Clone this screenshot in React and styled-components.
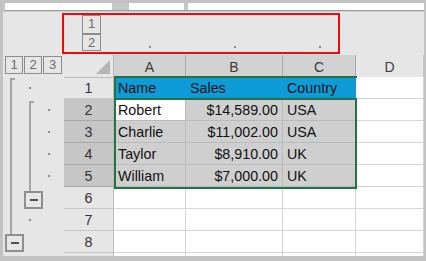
import React from 'react';
import styled, { createGlobalStyle } from 'styled-components';

const GlobalStyle = createGlobalStyle`
  html, body {
    margin: 0;
    padding: 0;
    background: #fff;
  }
  body {
    font-family: "Liberation Sans", Arial, sans-serif;
  }
`;

const COLS = '61px 50px 72px 97px 73px 68px';

const Frame = styled.div`
  position: relative;
  width: 426px;
  height: 261px;
  box-sizing: border-box;
  background: #c2c2c2;
  padding: 3px 2px 5px 3px;
  overflow: hidden;
  display: flex;
  flex-direction: column;
`;

const TopBar = styled.div`
  height: 7px;
  display: flex;
  gap: 4px;
  padding-left: 2px;
  background: #c8c8c8;
`;

const Field = styled.div`
  background: #fff;
  width: ${p => (p.$w ? `${p.$w}px` : 'auto')};
  flex: ${p => (p.$w ? 'none' : 1)};
  margin-right: ${p => p.$gap || 0}px;
`;

const TopRule = styled.div`
  height: 2px;
  box-sizing: border-box;
  border-top: 1px solid #9c9c9c;
  border-bottom: 1px solid #cfcfcf;
  margin-left: 2px;
`;

const Sheet = styled.div`
  flex: 1;
  display: flex;
  flex-direction: column;
  background: #e6e6e6;
  overflow: hidden;
`;

const GridRow = styled.div`
  display: grid;
  grid-template-columns: ${COLS};
  height: ${p => p.$h || 22}px;
  flex: none;
`;

const ColOutlineCell = styled.div`
  display: flex;
  justify-content: center;
  padding-top: 27px;
`;

const LevelStack = styled.div`
  display: flex;
  flex-direction: column;
  margin: 3px 0 0 18px;
  width: 19px;
`;

const LevelBtn = styled.div`
  box-sizing: border-box;
  width: ${p => p.$w || 19}px;
  height: 18px;
  border: 1px solid #8c8c8c;
  ${p => p.$stack && 'border-bottom-width: 0;'}
  ${p => p.$under && 'border-top-width: 2px; border-top-color: #8c8c8c;'}
  color: #6a6a6a;
  font-size: 13px;
  line-height: 16px;
  text-align: center;
`;

const LevelRow = styled.div`
  display: flex;
  gap: 1px;
  padding: 1px 0 0 2px;
`;

const Dot = styled.span`
  width: 2px;
  height: 2px;
  background: #8e8e8e;
  align-self: center;
  flex: none;
`;

const Corner = styled.div`
  position: relative;
  border-right: 1px solid #bcbcbc;
  border-bottom: 1px solid #bcbcbc;
  &::after {
    content: '';
    position: absolute;
    right: 3px;
    bottom: 3px;
    width: 0;
    height: 0;
    border-left: 14px solid transparent;
    border-bottom: 14px solid #b5b5b5;
  }
`;

const ColHead = styled.div`
  box-sizing: border-box;
  background: ${p => (p.$sel ? '#d2d2d2' : '#e6e6e6')};
  border-right: 1px solid ${p => (p.$sel ? '#a9a9a9' : '#c4c4c4')};
  border-bottom: 1px solid #bcbcbc;
  color: #3a3a3a;
  font-size: 14px;
  text-align: center;
  line-height: 20px;
  padding-top: 2px;
`;

const OutlineCell = styled.div`
  display: flex;
  padding-left: 2px;
`;

const Slot = styled.div`
  width: 19px;
  flex: none;
  display: flex;
  align-items: stretch;
  padding-left: ${p => (p.$minus ? 0 : 5)}px;
  box-sizing: border-box;
  flex-direction: ${p => (p.$minus ? 'column' : 'row')};
`;

const Rail = styled.div`
  width: 5px;
  box-sizing: border-box;
  border-left: 2px solid #a3a3a3;
  border-top: ${p => (p.$start ? '2px solid #a3a3a3' : 'none')};
  margin-top: ${p => p.$offset || 0}px;
`;

const RailStub = styled.div`
  width: 2px;
  height: ${p => p.$h}px;
  margin-left: 5px;
  background: #a3a3a3;
  flex: none;
`;

const MinusBox = styled.div`
  box-sizing: border-box;
  width: 19px;
  height: 18px;
  border: 2px solid #8f8f8f;
  display: flex;
  align-items: center;
  justify-content: center;
  &::before {
    content: '';
    width: 8px;
    height: 2px;
    background: #505050;
  }
`;

const RowHead = styled.div`
  box-sizing: border-box;
  background: ${p => (p.$sel ? '#c6c6c6' : '#e6e6e6')};
  border-bottom: 1px solid ${p => (p.$sel ? '#a9a9a9' : '#c8c8c8')};
  border-right: 1px solid #bcbcbc;
  color: #333;
  font-size: 14.3px;
  text-align: center;
  line-height: 19px;
  padding-top: 2px;
`;

const cellBg = { blue: '#0e9cd8', sel: '#cfcfcf', active: '#fff', plain: '#fff' };
const cellLine = { blue: '#0e9cd8', sel: '#bababa', active: '#bababa', plain: '#d4d4d4' };

const Cell = styled.div`
  box-sizing: border-box;
  background: ${p => cellBg[p.$kind]};
  border-right: 1px solid ${p => cellLine[p.$kind]};
  border-bottom: 1px solid ${p => (p.$kind === 'blue' ? '#bababa' : cellLine[p.$kind])};
  color: #111;
  font-size: 14.3px;
  line-height: 19px;
  padding: 2px 4px 0 4px;
  text-align: ${p => p.$align || 'left'};
  white-space: nowrap;
  overflow: hidden;
`;

const Selection = styled.div`
  position: absolute;
  left: 114px;
  top: 98px;
  width: 243px;
  height: 91px;
  box-sizing: border-box;
  border: 2px solid #217346;
  pointer-events: none;
`;

const HeaderEdge = styled.div`
  position: absolute;
  left: 114px;
  top: 76px;
  width: 243px;
  height: 24px;
  box-sizing: border-box;
  border-top: 2px solid #217346;
  border-left: 2px solid #217346;
  pointer-events: none;
`;

const Callout = styled.div`
  position: absolute;
  left: 62px;
  top: 13px;
  width: 278px;
  height: 41px;
  box-sizing: border-box;
  border: 2px solid #ee0a0a;
  pointer-events: none;
`;

const data = [
  ['Robert', '$14,589.00', 'USA'],
  ['Charlie', '$11,002.00', 'USA'],
  ['Taylor', '$8,910.00', 'UK'],
  ['William', '$7,000.00', 'UK'],
];

// outline gutter per row: [level1, level2, level3]
const outline = [
  [{ rail: true, start: true }, { dot: true }, {}],
  [{ rail: true }, { rail: true, start: true, offset: 2 }, { dot: true }],
  [{ rail: true }, { rail: true }, { dot: true }],
  [{ rail: true }, { rail: true }, { dot: true }],
  [{ rail: true }, { rail: true }, { dot: true }],
  [{ rail: true }, { minus: 4 }, {}],
  [{ rail: true }, { dot: true }, {}],
  [{ minus: 3 }, {}, {}],
  [{}, {}, {}],
];

function OutlineSlot({ s }) {
  if (s.minus) {
    return (
      <Slot $minus>
        <RailStub $h={s.minus} />
        <MinusBox />
      </Slot>
    );
  }
  return (
    <Slot>
      {s.rail && <Rail $start={s.start} $offset={s.start ? s.offset || 1 : 0} />}
      {s.dot && <Dot />}
    </Slot>
  );
}

function rowCells(i) {
  if (i === 0) {
    return [
      <Cell key="a" $kind="blue">Name</Cell>,
      <Cell key="b" $kind="blue">Sales</Cell>,
      <Cell key="c" $kind="blue">Country</Cell>,
      <Cell key="d" $kind="plain" />,
    ];
  }
  const d = data[i - 1];
  if (d) {
    return [
      <Cell key="a" $kind={i === 1 ? 'active' : 'sel'}>{d[0]}</Cell>,
      <Cell key="b" $kind="sel" $align="right">{d[1]}</Cell>,
      <Cell key="c" $kind="sel">{d[2]}</Cell>,
      <Cell key="d" $kind="plain" />,
    ];
  }
  return ['a', 'b', 'c', 'd'].map(k => <Cell key={k} $kind="plain" />);
}

export default function App() {
  return (
    <>
      <GlobalStyle />
      <Frame>
        <TopBar>
          <Field $w={107} $gap={13} />
          <Field $w={55} />
          <Field />
        </TopBar>
        <TopRule />
        <Sheet>
          <GridRow $h={43}>
            <div />
            <LevelStack>
              <LevelBtn $stack>1</LevelBtn>
              <LevelBtn $under>2</LevelBtn>
            </LevelStack>
            <ColOutlineCell><Dot /></ColOutlineCell>
            <ColOutlineCell><Dot /></ColOutlineCell>
            <ColOutlineCell><Dot /></ColOutlineCell>
            <div />
          </GridRow>
          <GridRow>
            <LevelRow>
              <LevelBtn $w={18}>1</LevelBtn>
              <LevelBtn $w={18}>2</LevelBtn>
              <LevelBtn $w={19}>3</LevelBtn>
            </LevelRow>
            <Corner />
            <ColHead $sel>A</ColHead>
            <ColHead $sel>B</ColHead>
            <ColHead $sel>C</ColHead>
            <ColHead>D</ColHead>
          </GridRow>
          {outline.map((o, i) => (
            <GridRow key={i}>
              <OutlineCell>
                {o.map((s, j) => <OutlineSlot key={j} s={s} />)}
              </OutlineCell>
              <RowHead $sel={i >= 1 && i <= 4}>{i < 8 ? i + 1 : ''}</RowHead>
              {rowCells(i)}
            </GridRow>
          ))}
        </Sheet>
        <HeaderEdge />
        <Selection />
        <Callout />
      </Frame>
    </>
  );
}
